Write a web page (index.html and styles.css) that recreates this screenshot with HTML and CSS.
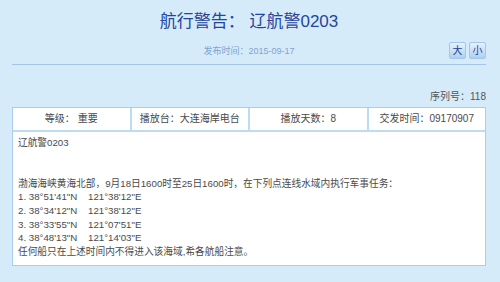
FILE: index.html
```html
<!DOCTYPE html>
<html lang="zh-CN">
<head>
    <meta charset="UTF-8">
    <meta name="viewport" content="width=device-width, initial-scale=1.0">
    <title>航行警告</title>
    <link rel="stylesheet" href="styles.css">
</head>
<body>
    <div class="page">
        <h1 class="title">航行警告： 辽航警0203</h1>
        <div class="meta">
            <span></span>
            <span class="date">发布时间：2015-09-17</span>
            <span class="size-btns">
                <a class="size-btn" href="#">大</a>
                <a class="size-btn" href="#">小</a>
            </span>
        </div>

        <p class="serial">序列号：118</p>

        <div class="notice">
            <div class="cell">等级： 重要</div>
            <div class="cell">播放台：大连海岸电台</div>
            <div class="cell">播放天数：8</div>
            <div class="cell">交发时间：09170907</div>
            <div class="content">
                辽航警0203<br><br><br>
                渤海海峡黄海北部，9月18日1600时至25日1600时，在下列点连线水域内执行军事任务：<br>
                1. 38°51'41"N&nbsp;&nbsp;&nbsp;&nbsp;121°38'12"E<br>
                2. 38°34'12"N&nbsp;&nbsp;&nbsp;&nbsp;121°38'12"E<br>
                3. 38°33'55"N&nbsp;&nbsp;&nbsp;&nbsp;121°07'51"E<br>
                4. 38°48'13"N&nbsp;&nbsp;&nbsp;&nbsp;121°14'03"E<br>
                任何船只在上述时间内不得进入该海域,希各航船注意。
            </div>
        </div>
    </div>
</body>
</html>
```

FILE: styles.css
```css
/* 页面基础 */
body {
    margin: 0;
    background: #d6ebf9;
    font-family: "Liberation Sans", "Noto Sans CJK SC", sans-serif;
    color: #4a4a4a;
}

.page {
    padding: 0 14px 0 12px;
}

.title {
    margin: 11px 0 0;
    font-size: 17px;
    font-weight: normal;
    line-height: 22px;
    text-align: center;
    color: #23459f;
}

/* 发布时间 + 字号按钮 */
.meta {
    display: grid;
    grid-template-columns: 1fr auto 1fr;
    align-items: center;
    margin-top: 9px;
    padding-bottom: 5px;
    border-bottom: 1px solid #a3c5e9;
}

.date {
    font-size: 9px;
    line-height: 16px;
    color: #7fa3cf;
}

.size-btns {
    display: flex;
    justify-content: flex-end;
    gap: 3px;
}

.size-btn {
    width: 15px;
    height: 15px;
    border: 1px solid #a6c5e8;
    border-radius: 2px;
    background: linear-gradient(#e6f2fd, #aecff2);
    font-size: 10px;
    line-height: 15px;
    text-align: center;
    text-decoration: none;
    color: #1e3f8f;
}

.serial {
    margin: 25px 0 3px;
    font-size: 10px;
    line-height: 14px;
    text-align: right;
    color: #555;
}

/* 警告表格 */
.notice {
    display: grid;
    grid-template-columns: repeat(4, 1fr);
    gap: 2px;
    background: #bcdcf4;
    border: 1px solid #a9cdee;
}

.cell {
    background: #fff;
    height: 22px;
    font-size: 10px;
    line-height: 22px;
    text-align: center;
}

.content {
    grid-column: 1 / -1;
    background: #fff;
    padding: 4px 5px 7px;
    font-size: 9.7px;
    line-height: 13.6px;
}
```
